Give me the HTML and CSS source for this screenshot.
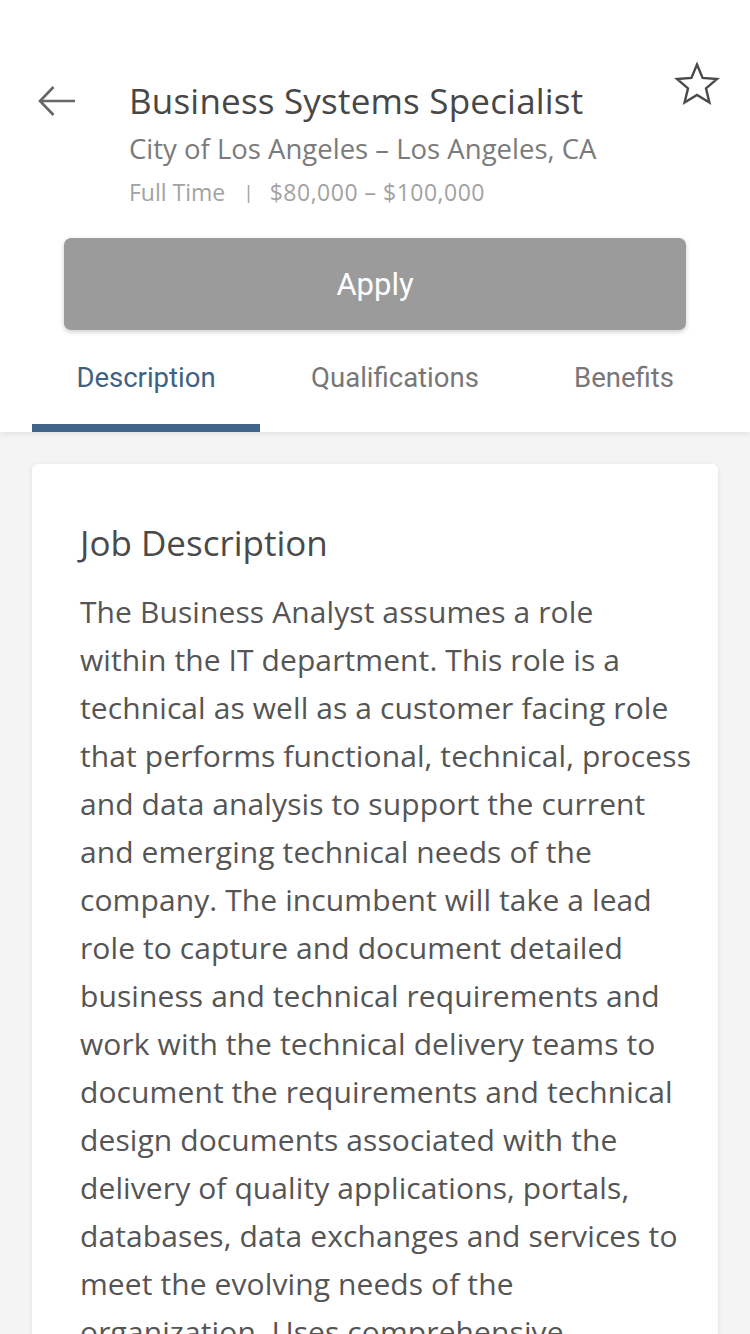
FILE: index.html
```html
<!DOCTYPE html>
<html>
<head>
<meta charset="utf-8">
<link rel="stylesheet" href="styles.css">
</head>
<body>
<div class="page">
  <header class="header">
    <div class="top">
      <button class="back" aria-label="Back">
        <svg width="40" height="32" viewBox="0 0 40 32"><path d="M38 16H3.5M16.5 2L3 16l13.5 14" fill="none" stroke="#666" stroke-width="2.6"/></svg>
      </button>
      <div class="info">
        <h1 class="title">Business Systems Specialist</h1>
        <div class="company">City of Los Angeles – Los Angeles, CA</div>
        <div class="meta"><span>Full Time</span><span class="sep">|</span><span>$80,000 – $100,000</span></div>
      </div>
      <button class="star" aria-label="Save">
        <svg width="46" height="44" viewBox="0 0 46 44"><path d="M23 2.5l5.6 13.4 14.4 1.1-11 9.4 3.4 14.1L23 32.9l-12.4 7.6L14 26.4 3 17l14.4-1.1z" fill="none" stroke="#4a4a4a" stroke-width="2.4" stroke-linejoin="miter"/></svg>
      </button>
    </div>
    <div class="apply-wrap"><button class="apply">Apply</button></div>
    <nav class="tabs">
      <div class="tab active">Description</div>
      <div class="tab">Qualifications</div>
      <div class="tab">Benefits</div>
    </nav>
  </header>
  <main class="content">
    <section class="card">
      <h2 class="card-title">Job Description</h2>
      <p class="body">
        <span class="line">The Business Analyst assumes a role</span>
        <span class="line">within the IT department. This role is a</span>
        <span class="line">technical as well as a customer facing role</span>
        <span class="line">that performs functional, technical, process</span>
        <span class="line">and data analysis to support the current</span>
        <span class="line">and emerging technical needs of the</span>
        <span class="line">company. The incumbent will take a lead</span>
        <span class="line">role to capture and document detailed</span>
        <span class="line">business and technical requirements and</span>
        <span class="line">work with the technical delivery teams to</span>
        <span class="line">document the requirements and technical</span>
        <span class="line">design documents associated with the</span>
        <span class="line">delivery of quality applications, portals,</span>
        <span class="line">databases, data exchanges and services to</span>
        <span class="line">meet the evolving needs of the</span>
        <span class="line">organization. Uses comprehensive</span>
        <span class="line">knowledge of business processes.</span>
      </p>
    </section>
  </main>
</div>
</body>
</html>
```
FILE: styles.css
```css
* { box-sizing: border-box; }
html, body { margin: 0; padding: 0; }
body { background: #f4f4f4; font-family: "Open Sans", "Lato", sans-serif; overflow: hidden; height: 1334px; }
.page { width: 750px; }
.header { background: #fff; box-shadow: 0 2px 6px rgba(0,0,0,0.07); position: relative; z-index: 1; }
.top { display: flex; align-items: flex-start; padding-top: 60px; }
.back { border: 0; background: none; padding: 0; margin: 25px 0 0 36px; width: 42px; height: 32px; }
.info { margin: 19px 0 0 51px; flex: 1; }
.title { margin: 0; font-size: 35px; font-weight: 400; color: #474747; line-height: 44px; letter-spacing: 0.2px; }
.company { margin-top: 8px; font-size: 27.5px; color: #7b7b7b; line-height: 36px; }
.meta { margin-top: 10px; font-size: 23px; color: #a2a2a2; line-height: 30px; }
.meta span:last-child { letter-spacing: 0.5px; }
.sep { margin: 0 16px 0 18px; font-size: 19px; position: relative; top: -2px; }
.star { border: 0; background: none; padding: 0; margin: 2px 30px 0 0; width: 46px; height: 44px; }
.apply-wrap { padding: 29px 64px 0; }
.apply { display: block; width: 100%; height: 92px; border: 0; border-radius: 7px; background: #9b9b9b; color: #fff; font-family: "Roboto", sans-serif; font-size: 31px; box-shadow: 0 2px 5px rgba(0,0,0,0.2); }
.tabs { display: flex; padding: 0 32px; }
.tab { height: 102px; display: flex; align-items: center; justify-content: center; font-family: "Roboto", sans-serif; font-size: 27.5px; color: #777; padding-bottom: 8px; }
.tab:nth-child(1) { width: 228px; }
.tab:nth-child(2) { width: 270px; }
.tab:nth-child(3) { width: 188px; }
.tab.active { color: #3e6284; border-bottom: 8px solid #3f6487; padding-bottom: 0; }
.content { padding: 32px 32px 0; }
.card { background: #fff; border-radius: 6px; box-shadow: 0 1px 4px rgba(0,0,0,0.1); padding: 57px 20px 40px 48px; }
.card-title { margin: 0; font-size: 35px; font-weight: 400; color: #4a4a4a; line-height: 44px; }
.body { margin: 23px 0 0; font-size: 30px; letter-spacing: 0.1px; line-height: 48px; color: #555; }
.line { display: block; white-space: nowrap; }
```
